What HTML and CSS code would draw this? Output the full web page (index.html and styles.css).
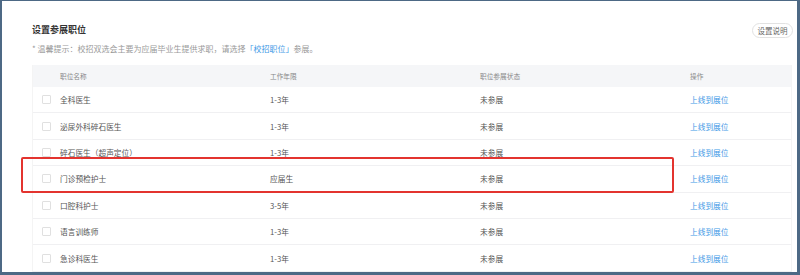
FILE: index.html
```html
<!DOCTYPE html>
<html lang="zh-CN">
<head>
  <meta charset="UTF-8" />
  <title>设置参展职位</title>
  <link rel="stylesheet" href="styles.css">
</head>
<body>
  <div class="frame">
    <div class="panel">
      <div class="panel-head">
        <h2 class="title">设置参展职位</h2>
        <button class="help-btn">设置说明</button>
      </div>
      <p class="hint">* 温馨提示：校招双选会主要为应届毕业生提供求职，请选择<span class="hint-link">「校招职位」</span>参展。</p>

      <div class="table">
        <div class="row head">
          <span></span>
          <span>职位名称</span>
          <span>工作年限</span>
          <span>职位参展状态</span>
          <span>操作</span>
        </div>
        <div class="row">
          <span class="check"></span>
          <span>全科医生</span>
          <span>1-3年</span>
          <span>未参展</span>
          <a class="link" href="#">上线到展位</a>
        </div>
        <div class="row">
          <span class="check"></span>
          <span>泌尿外科碎石医生</span>
          <span>1-3年</span>
          <span>未参展</span>
          <a class="link" href="#">上线到展位</a>
        </div>
        <div class="row">
          <span class="check"></span>
          <span>碎石医生（超声定位）</span>
          <span>1-3年</span>
          <span>未参展</span>
          <a class="link" href="#">上线到展位</a>
        </div>
        <div class="row">
          <span class="check"></span>
          <span>门诊预检护士</span>
          <span>应届生</span>
          <span>未参展</span>
          <a class="link" href="#">上线到展位</a>
        </div>
        <div class="row">
          <span class="check"></span>
          <span>口腔科护士</span>
          <span>3-5年</span>
          <span>未参展</span>
          <a class="link" href="#">上线到展位</a>
        </div>
        <div class="row">
          <span class="check"></span>
          <span>语言训练师</span>
          <span>1-3年</span>
          <span>未参展</span>
          <a class="link" href="#">上线到展位</a>
        </div>
        <div class="row">
          <span class="check"></span>
          <span>急诊科医生</span>
          <span>1-3年</span>
          <span>未参展</span>
          <a class="link" href="#">上线到展位</a>
        </div>
      </div>
    </div>

    <!-- annotation box over the 4th row -->
    <div class="mark"></div>
  </div>
</body>
</html>
```

FILE: styles.css
```css
:root {
  --frame: #4d6985;
  --text: #555;
  --muted: #999;
  --blue: #3f9ae6;
  --line: #f0f0f2;
  --head-bg: #f5f6f8;
  --red: #e3342f;
}

* { box-sizing: border-box; }

body {
  margin: 0;
  font-family: "Noto Sans CJK SC", "Noto Sans", sans-serif;
  background: #fff;
}

.frame {
  position: relative;
  width: 800px;
  height: 275px;
  border-style: solid;
  border-color: var(--frame);
  border-width: 1px 3px 3px 2px;
  overflow: hidden;
  background: #fff;
}

.panel {
  padding: 22px 5px 0 30px;
}

.panel-head {
  display: flex;
  justify-content: space-between;
  align-items: center;
  height: 14px;
}

.title {
  margin: 0;
  font-size: 9px;
  line-height: 14px;
  font-weight: bold;
  color: #333;
}

.help-btn {
  height: 15px;
  width: 41px;
  padding: 0;
  margin-right: -1px;
  border: 1px solid #e2e2e2;
  border-radius: 8px;
  background: #fff;
  font-family: inherit;
  font-size: 7.5px;
  line-height: 13px;
  color: #666;
}

.hint {
  margin: 6px 0 0;
  font-size: 8px;
  line-height: 12px;
  color: var(--muted);
}

.hint-link { color: var(--blue); }

.table {
  margin-top: 10px;
  border-left: 1px solid #f4f4f4;
  border-right: 1px solid #f4f4f4;
}

.row {
  display: grid;
  grid-template-columns: 27px 210px 210px 210px 1fr;
  align-items: center;
  height: 26.4px;
  border-bottom: 1px solid var(--line);
  font-size: 7.7px;
  color: var(--text);
}

.row.head {
  height: 22px;
  background: var(--head-bg);
  border-bottom: none;
  font-size: 6.7px;
  color: #888;
}

.check {
  width: 9px;
  height: 9px;
  margin-left: 9px;
  border: 1px solid #e0e0e0;
  border-radius: 1px;
}

.link {
  color: var(--blue);
  text-decoration: none;
}

.mark {
  position: absolute;
  left: 19px;
  top: 156px;
  width: 653px;
  height: 36px;
  border: 2px solid var(--red);
  border-radius: 2px;
}
```
